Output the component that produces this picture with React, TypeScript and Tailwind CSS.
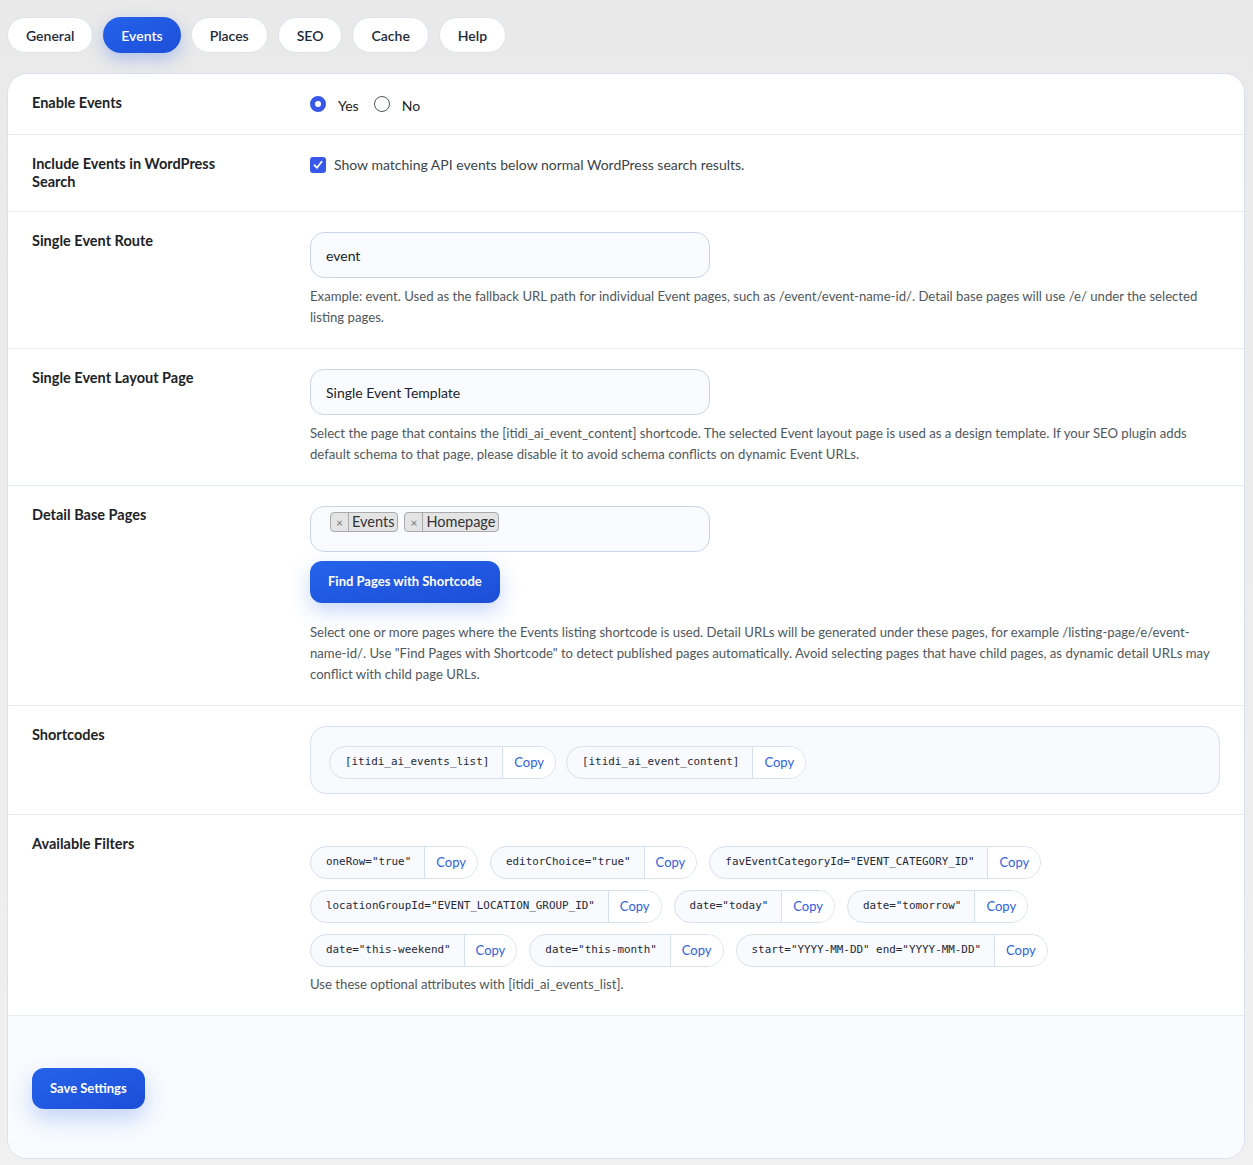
import React, { useState } from 'react';

const tabs = ['General', 'Events', 'Places', 'SEO', 'Cache', 'Help'];

const filters = [
  'oneRow="true"',
  'editorChoice="true"',
  'favEventCategoryId="EVENT_CATEGORY_ID"',
  'locationGroupId="EVENT_LOCATION_GROUP_ID"',
  'date="today"',
  'date="tomorrow"',
  'date="this-weekend"',
  'date="this-month"',
  'start="YYYY-MM-DD" end="YYYY-MM-DD"',
];

const CopyPill = ({ code }: { code: string }) => (
  <div className="flex h-[33px] items-stretch overflow-hidden rounded-full border border-[#d7e0ee] bg-[#f8fafd]">
    <code className="flex items-center whitespace-pre pl-[15px] pr-[13px] font-['DejaVu_Sans_Mono',monospace] text-[10.9px] text-[#1e293b]">
      {code}
    </code>
    <button className="border-l border-[#d7e0ee] bg-white px-[11px] pt-[1px] text-[13px] text-[#2f5fe0]">Copy</button>
  </div>
);

const Row = ({ label, children }: { label: React.ReactNode; children: React.ReactNode }) => (
  <div className="grid grid-cols-[254px_1fr] gap-[24px] border-b border-[#e6ebf2] px-[24px] py-[20px]">
    <div className="text-[14.5px] font-bold leading-[18px] text-[#1d2327]">{label}</div>
    <div>{children}</div>
  </div>
);

const Help = ({ children, className = '' }: { children: React.ReactNode; className?: string }) => (
  <p className={`text-[13.15px] leading-[21px] text-[#50575e] ${className}`}>{children}</p>
);

export default function App() {
  const [active, setActive] = useState('Events');
  const [enabled, setEnabled] = useState(true);

  return (
    <div className="min-h-[1165px] bg-gradient-to-b from-[#e9e9e9] to-[#f0f0f1] pl-[7px] pr-[8px] pt-[17px] font-['Lato','Noto_Sans',sans-serif] text-[#1d2327]">
      <div className="flex gap-[10px]">
        {tabs.map((t) =>
          t === active ? (
            <button
              key={t}
              onClick={() => setActive(t)}
              className="h-[36px] rounded-full bg-gradient-to-br from-[#2563eb] to-[#1d4ed8] px-[18px] text-[14px] font-semibold text-white shadow-[0_6px_16px_rgba(37,99,235,0.3)]"
            >
              {t}
            </button>
          ) : (
            <button
              key={t}
              onClick={() => setActive(t)}
              className="h-[36px] rounded-full border border-[#dde3ec] bg-white px-[18px] text-[14px] font-semibold text-[#1e293b]"
            >
              {t}
            </button>
          )
        )}
      </div>

      <div className="mt-[20px] overflow-hidden rounded-[20px] border border-[#d9e1ee] bg-white">
        <Row label="Enable Events">
          <div className="flex h-[20px] items-center text-[14px] text-[#1d2327]">
            <label className="flex items-center">
              <span
                onClick={() => setEnabled(true)}
                className={`inline-block h-[16px] w-[16px] rounded-full ${enabled ? 'border-[5px] border-[#3858e9]' : 'border border-[#50575e]'}`}
              />
              <span className="ml-[12px] mt-[3px]">Yes</span>
            </label>
            <label className="ml-[15px] flex items-center">
              <span
                onClick={() => setEnabled(false)}
                className={`inline-block h-[16px] w-[16px] rounded-full ${!enabled ? 'border-[5px] border-[#3858e9]' : 'border border-[#50575e]'}`}
              />
              <span className="ml-[12px] mt-[3px]">No</span>
            </label>
          </div>
        </Row>

        <Row
          label={
            <>
              Include Events in WordPress
              <br />
              Search
            </>
          }
        >
          <label className="flex items-center text-[14px] leading-[20px] text-[#3c434a]">
            <span className="flex h-[16px] w-[16px] items-center justify-center rounded-[3px] bg-[#3858e9]">
              <svg width="12" height="12" viewBox="0 0 12 12" fill="none">
                <path d="M2.5 6.2 L5 8.8 L9.6 2.8" stroke="white" strokeWidth="1.8" strokeLinecap="round" strokeLinejoin="round" />
              </svg>
            </span>
            <span className="ml-[8px]">Show matching API events below normal WordPress search results.</span>
          </label>
        </Row>

        <Row label="Single Event Route">
          <div className="flex h-[46px] w-[400px] items-center rounded-[14px] border border-[#cad6e8] bg-[#f9fbfe] px-[15px] text-[14px] text-[#1d2327]">
            event
          </div>
          <Help className="mt-[8px]">
            Example: event. Used as the fallback URL path for individual Event pages, such as /event/event-name-id/. Detail base pages will use /e/ under the selected listing pages.
          </Help>
        </Row>

        <Row label="Single Event Layout Page">
          <div className="flex h-[46px] w-[400px] items-center rounded-[14px] border border-[#cad6e8] bg-[#f9fbfe] px-[15px] text-[14px] text-[#1d2327]">
            Single Event Template
          </div>
          <Help className="mt-[8px]">
            Select the page that contains the [itidi_ai_event_content] shortcode. The selected Event layout page is used as a design template. If your SEO plugin adds default schema to that page, please disable it to avoid schema conflicts on dynamic Event URLs.
          </Help>
        </Row>

        <Row label="Detail Base Pages">
          <div className="flex h-[46px] w-[400px] items-start gap-[6px] rounded-[14px] border border-[#cad6e8] bg-[#f9fbfe] pl-[19px] pt-[5px]">
            {['Events', 'Homepage'].map((p) => (
              <span key={p} className="flex h-[20px] items-stretch rounded-[4px] border border-[#aaaaaa] bg-[#e4e4e4] text-[14.5px] leading-[18px] text-[#333]">
                <span className="flex items-center border-r border-[#aaaaaa] px-[5px] pt-[2px] text-[12px] text-[#777]">×</span>
                <span className="px-[3px]">{p}</span>
              </span>
            ))}
          </div>
          <button className="mt-[9px] h-[42px] rounded-[12px] bg-gradient-to-br from-[#2563eb] to-[#1d4ed8] px-[18px] text-[13px] font-bold text-white shadow-[0_8px_20px_rgba(37,99,235,0.25)]">
            Find Pages with Shortcode
          </button>
          <Help className="mt-[19px]">
            Select one or more pages where the Events listing shortcode is used. Detail URLs will be generated under these pages, for example /listing-page/e/event-name-id/. Use "Find Pages with Shortcode" to detect published pages automatically. Avoid selecting pages that have child pages, as dynamic detail URLs may conflict with child page URLs.
          </Help>
        </Row>

        <Row label="Shortcodes">
          <div className="flex flex-wrap gap-[10px] rounded-[16px] border border-[#d9e2ef] bg-[#f8fafd] pb-[14px] pl-[18px] pt-[19px]">
            <CopyPill code="[itidi_ai_events_list]" />
            <CopyPill code="[itidi_ai_event_content]" />
          </div>
        </Row>

        <Row label="Available Filters">
          <div className="mt-[11px] flex flex-wrap gap-x-[12px] gap-y-[11px]">
            {filters.map((f) => (
              <CopyPill key={f} code={f} />
            ))}
          </div>
          <Help className="mt-[7px]">Use these optional attributes with [itidi_ai_events_list].</Help>
        </Row>

        <div className="bg-[#f9fbfe] px-[24px] pb-[49px] pt-[52px]">
          <button className="h-[41px] rounded-[12px] bg-gradient-to-br from-[#2563eb] to-[#1d4ed8] px-[18px] text-[13px] font-bold text-white shadow-[0_10px_22px_rgba(37,99,235,0.25)]">
            Save Settings
          </button>
        </div>
      </div>
    </div>
  );
}
